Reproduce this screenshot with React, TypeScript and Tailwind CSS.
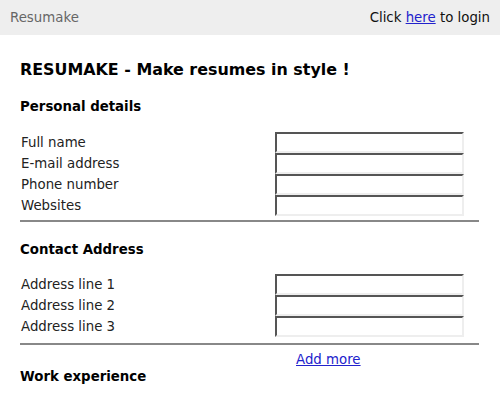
export default function App() {
  const personal = ["Full name", "E-mail address", "Phone number", "Websites"];
  const address = ["Address line 1", "Address line 2", "Address line 3"];

  const Row = ({ label }: { label: string }) => (
    <div className="flex items-center h-[21px]">
      <span className="w-[255px] pl-px text-[13.33px] text-[#222]">{label}</span>
      <input
        type="text"
        className="w-[189px] h-[21px] bg-white border-2 border-t-[#555] border-l-[#555] border-b-[#eee] border-r-[#eee] outline-none"
      />
    </div>
  );

  return (
    <div className="w-[500px] h-[400px] overflow-hidden bg-white font-['DejaVu_Sans',sans-serif]">
      {/* top bar */}
      <div className="h-[35px] bg-[#eeeeee] flex items-center justify-between px-[10px] text-[13.33px]">
        <span className="text-[#666]">Resumake</span>
        <span className="text-[#111]">
          Click <a href="#" className="text-[#2222cc] underline">here</a> to login
        </span>
      </div>

      <div className="px-[20px]">
        <h1 className="mt-[25px] h-[19px] leading-[19px] text-[15.9px] font-bold text-black">
          RESUMAKE - Make resumes in style !
        </h1>

        <h2 className="mt-[19px] h-[17px] leading-[17px] text-[13.33px] font-bold text-black">
          Personal details
        </h2>
        <div className="mt-[17px] flex flex-col">
          {personal.map((l) => (
            <Row key={l} label={l} />
          ))}
        </div>
        <div className="mt-[4px] w-[459px] h-[2px] bg-[#888]" />

        <h2 className="mt-[19px] h-[17px] leading-[17px] text-[13.33px] font-bold text-black">
          Contact Address
        </h2>
        <div className="mt-[16px] flex flex-col">
          {address.map((l) => (
            <Row key={l} label={l} />
          ))}
        </div>
        <div className="mt-[6px] w-[459px] h-[2px] bg-[#888]" />

        <div className="mt-[6px] pl-[276px] h-[17px] leading-[17px] text-[13.33px]">
          <a href="#" className="text-[#2222cc] underline">Add more</a>
        </div>
        <h2 className="mt-[0px] h-[17px] leading-[17px] text-[13.33px] font-bold text-black">
          Work experience
        </h2>
      </div>
    </div>
  );
}
